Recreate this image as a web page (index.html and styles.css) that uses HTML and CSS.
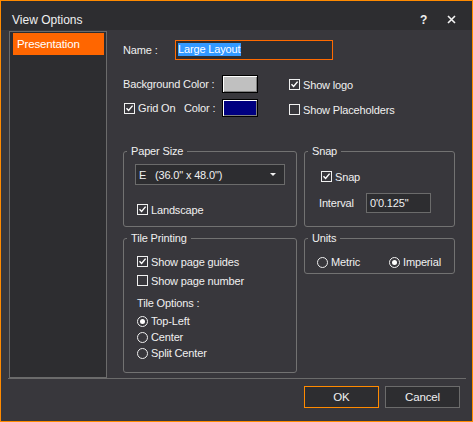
FILE: index.html
```html
<!DOCTYPE html>
<html>
<head>
<meta charset="utf-8">
<link rel="stylesheet" href="styles.css">
</head>
<body>
<div class="window">
  <div class="titlebar">
    <span class="title">View Options</span>
    <span class="help">?</span>
    <svg class="close" width="9" height="9" viewBox="0 0 9 9"><path d="M1 1 L8 8 M8 1 L1 8" stroke="#f4f4f4" stroke-width="1.6" fill="none"/></svg>
  </div>
  <div class="body">
    <div class="sidebar"><div class="tab">Presentation</div></div>
    <div class="main">
      <div class="name-row">
        <span class="name-label">Name :</span>
        <div class="name-input"><span class="sel">Large Layout</span></div>
      </div>
      <div class="top-grid">
        <div class="col-left">
          <div class="row">
            <span class="lbl-bg">Background Color :</span>
            <span class="swatch swatch-grey"></span>
          </div>
          <div class="row">
            <span class="check-item grid-on"><span class="check on"><svg viewBox="0 0 9 9"><polyline points="1.5,4.2 3.6,6.5 7.6,1.6" /></svg></span>Grid On</span>
            <span class="lbl-color">Color :</span>
            <span class="swatch swatch-navy"></span>
          </div>
        </div>
        <div class="col-right">
          <span class="check-item"><span class="check on"><svg viewBox="0 0 9 9"><polyline points="1.5,4.2 3.6,6.5 7.6,1.6" /></svg></span>Show logo</span>
          <span class="check-item"><span class="check"></span>Show Placeholders</span>
        </div>
      </div>
      <div class="groups">
        <div class="group paper">
          <span class="legend">Paper Size</span>
          <div class="select"><span class="select-text">E   (36.0" x 48.0")</span><span class="arrow"></span></div>
          <span class="check-item landscape"><span class="check on"><svg viewBox="0 0 9 9"><polyline points="1.5,4.2 3.6,6.5 7.6,1.6" /></svg></span>Landscape</span>
        </div>
        <div class="group snap">
          <span class="legend">Snap</span>
          <span class="check-item snap-check"><span class="check on"><svg viewBox="0 0 9 9"><polyline points="1.5,4.2 3.6,6.5 7.6,1.6" /></svg></span>Snap</span>
          <div class="interval-row">
            <span class="interval-label">Interval</span>
            <div class="interval-input">0'0.125"</div>
          </div>
        </div>
        <div class="group tile">
          <span class="legend">Tile Printing</span>
          <span class="check-item guides"><span class="check on"><svg viewBox="0 0 9 9"><polyline points="1.5,4.2 3.6,6.5 7.6,1.6" /></svg></span>Show page guides</span>
          <span class="check-item pagenum"><span class="check"></span>Show page number</span>
          <span class="tile-options">Tile Options :</span>
          <div class="radios">
            <span class="radio-item"><span class="radio on"></span>Top-Left</span>
            <span class="radio-item"><span class="radio"></span>Center</span>
            <span class="radio-item"><span class="radio"></span>Split Center</span>
          </div>
        </div>
        <div class="group units">
          <span class="legend">Units</span>
          <div class="units-row">
            <span class="radio-item metric"><span class="radio"></span>Metric</span>
            <span class="radio-item"><span class="radio on"></span>Imperial</span>
          </div>
        </div>
      </div>
    </div>
  </div>
  <div class="footer">
    <div class="btn ok">OK</div>
    <div class="btn">Cancel</div>
  </div>
</div>
</body>
</html>
```
FILE: styles.css
```css
* { box-sizing: border-box; }
html, body { margin: 0; padding: 0; background: #38373c; }
body {
  font-family: "Liberation Sans", Arial, sans-serif;
  font-size: 11px;
  letter-spacing: -0.15px;
  color: #f0f0f0;
}
.window {
  width: 473px;
  height: 422px;
  border: 1px solid #ff8a00;
  background: #38373c;
  display: flex;
  flex-direction: column;
}
.titlebar {
  height: 29px;
  background: #2d2d30;
  display: flex;
  align-items: center;
  padding: 8px 0 0 11px;
  flex: none;
}
.title { font-size: 12px; color: #f0f0f0; flex: 1; letter-spacing: 0; }
.help { font-size: 12px; font-weight: bold; width: 10px; margin-right: 17px; }
.close { margin-right: 16px; }
.body {
  height: 348px;
  display: flex;
  padding-left: 8px;
  flex: none;
}
.sidebar {
  width: 98px;
  height: 347px;
  margin-top: 1px;
  border: 1px solid #6b6b6b;
  background: #2d2d30;
  padding: 1px 2px 0 3px;
  flex: none;
}
.tab {
  height: 22px;
  background: #ff6600;
  color: #ffffff;
  font-size: 11.5px;
  display: flex;
  align-items: center;
  padding-left: 4px;
}
.main {
  flex: 1;
  padding: 10px 0 0 16px;
}
.name-row { display: flex; align-items: center; height: 20px; }
.name-label { width: 52px; }
.name-input {
  width: 158px;
  height: 20px;
  border: 1px solid #ff6a00;
  background: #2d2d30;
  padding: 2px 0 0 2px;
}
.sel { display: inline-block; background: #3399ff; color: #fff; line-height: 13px; padding-right: 1px; }
.top-grid { display: flex; margin-top: 15px; }
.col-left { width: 166px; display: flex; flex-direction: column; gap: 6px; }
.row { display: flex; align-items: center; height: 18px; }
.lbl-bg { width: 99px; }
.grid-on { width: 60px; margin-left: 1px; }
.lbl-color { width: 38px; }
.swatch {
  width: 36px;
  height: 18px;
  border: 1px solid #000;
  box-shadow: inset 1px 1px 0 #ffffff, inset -1px -1px 0 #808080;
}
.swatch-grey { background: #c0c0c0; }
.swatch-navy { background: #000080; }
.col-right { display: flex; flex-direction: column; padding-top: 3px; gap: 12px; }
.check-item { display: flex; align-items: center; height: 13px; gap: 3px; }
.check {
  width: 11px;
  height: 11px;
  border: 1px solid #f0f0f0;
  flex: none;
  display: flex;
}
.check svg { width: 9px; height: 9px; }
.check polyline { fill: none; stroke: #ffffff; stroke-width: 1.4; }
.radio {
  width: 11px;
  height: 11px;
  border: 1px solid #f0f0f0;
  border-radius: 50%;
  flex: none;
  display: flex;
  align-items: center;
  justify-content: center;
}
.radio.on::after {
  content: "";
  width: 5px;
  height: 5px;
  border-radius: 50%;
  background: #ffffff;
}
.radio-item { display: flex; align-items: center; height: 16px; gap: 3px; }
.groups {
  margin-top: 34px;
  display: grid;
  grid-template-columns: 174px 151px;
  grid-template-rows: 76px 135px;
  column-gap: 7px;
  row-gap: 11px;
}
.group {
  position: relative;
  border: 1px solid #727272;
  border-radius: 3px;
  display: flex;
  flex-direction: column;
  align-items: flex-start;
}
.legend {
  position: absolute;
  top: -8px;
  left: 3px;
  padding: 0 4px;
  background: #38373c;
  line-height: 14px;
}
.paper { padding: 12px 0 0 11px; }
.select {
  width: 150px;
  height: 21px;
  border: 1px solid #6b6b6b;
  background: #2d2d30;
  display: flex;
  align-items: center;
  padding: 0 0 0 3px;
}
.select-text { white-space: pre; flex: 1; }
.arrow {
  width: 0; height: 0;
  border-left: 3px solid transparent;
  border-right: 3px solid transparent;
  border-top: 3px solid #f0f0f0;
  margin-right: 8px;
}
.landscape { margin: 18px 0 0 2px; }
.snap { padding: 18px 0 0 16px; }
.interval-row { display: flex; align-items: center; margin: 10px 0 0 -2px; }
.interval-label { width: 47px; }
.interval-input {
  width: 65px;
  height: 20px;
  border: 1px solid #6b6b6b;
  background: #2d2d30;
  padding: 3px 0 0 3px;
}
.tile { padding: 16px 0 0 13px; }
.pagenum { margin-top: 6px; }
.tile-options { margin-top: 10px; line-height: 13px; }
.radios { margin-top: 3px; display: flex; flex-direction: column; }
.units { align-self: start; height: 36px; padding: 15px 0 0 12px; }
.units-row { display: flex; }
.metric { width: 72px; }
.footer {
  flex: none;
  margin: 0 6px 0 7px;
  border-top: 1px solid #6b6b6b;
  padding: 7px 6px 0 0;
  display: flex;
  justify-content: flex-end;
  gap: 6px;
}
.btn {
  width: 75px;
  height: 22px;
  border: 1px solid #6b6b6b;
  background: #2d2d30;
  display: flex;
  align-items: center;
  justify-content: center;
  font-size: 11.5px;
}
.btn.ok { border-color: #ff8a00; }
```
